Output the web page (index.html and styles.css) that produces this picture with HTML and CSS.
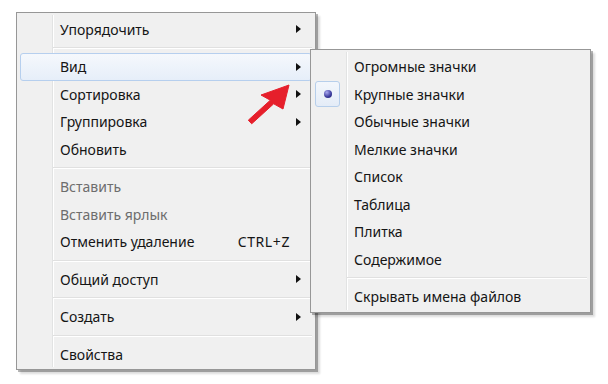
FILE: index.html
```html
<!DOCTYPE html>
<html lang="ru">
  <head>
    <meta charset="UTF-8" />
    <meta name="viewport" content="width=device-width, initial-scale=1.0" />
    <title>Контекстное меню</title>
    <link rel="stylesheet" href="styles.css">
  </head>
  <body>
    <div class="desktop">
      <ul class="menu main-menu">
        <li class="item has-sub">Упорядочить</li>
        <li class="sep"></li>
        <li class="item has-sub hover">Вид</li>
        <li class="item has-sub">Сортировка</li>
        <li class="item has-sub">Группировка</li>
        <li class="item">Обновить</li>
        <li class="sep"></li>
        <li class="item disabled">Вставить</li>
        <li class="item disabled">Вставить ярлык</li>
        <li class="item">Отменить удаление<span class="shortcut">CTRL+Z</span></li>
        <li class="sep"></li>
        <li class="item has-sub">Общий доступ</li>
        <li class="sep"></li>
        <li class="item has-sub">Создать</li>
        <li class="sep"></li>
        <li class="item">Свойства</li>
      </ul>

      <ul class="menu sub-menu">
        <li class="item">Огромные значки</li>
        <li class="item checked"><span class="radio"><span class="dot"></span></span>Крупные значки</li>
        <li class="item">Обычные значки</li>
        <li class="item">Мелкие значки</li>
        <li class="item">Список</li>
        <li class="item">Таблица</li>
        <li class="item">Плитка</li>
        <li class="item">Содержимое</li>
        <li class="sep"></li>
        <li class="item">Скрывать имена файлов</li>
      </ul>

      <svg class="pointer" width="608" height="384" viewBox="0 0 608 384">
        <polygon
          points="289,85 283,109 273.7,103.8 251.7,123.8 248.3,120.2 270.3,100.2 261,95"
          fill="#e61f2b"
          stroke="#e61f2b"
          stroke-width="1"
          stroke-linejoin="round"
        />
      </svg>
    </div>
  </body>
</html>
```

FILE: styles.css
```css
* {
  box-sizing: border-box;
  margin: 0;
  padding: 0;
}

body {
  background-color: #ffffff;
  font-family: "Noto Sans", "Open Sans", sans-serif;
  font-size: 14px;
  color: #151515;
}

.desktop {
  position: relative;
  width: 608px;
  height: 384px;
  padding: 12px 0 0 16px;
}

.menu {
  list-style: none;
  background-color: #f0f0f0;
  border: 1px solid #979797;
  box-shadow: 2px 2px 0 rgba(0, 0, 0, 0.28), 4px 4px 2px rgba(0, 0, 0, 0.14);
  position: relative;
}

/* vertical gutter line left of the labels */
.menu::before {
  content: "";
  position: absolute;
  top: 2px;
  bottom: 2px;
  left: 35px;
  width: 1px;
  background-color: #e2e3e3;
  box-shadow: 1px 0 0 #ffffff;
}

.main-menu {
  width: 300px;
  padding: 2.5px 0 1px;
}

.sub-menu {
  position: absolute;
  left: 310px;
  top: 49px;
  width: 281px;
  padding: 3px 0 1.5px;
}

.item {
  position: relative;
  height: 27.5px;
  line-height: 27.5px;
  padding-left: 40px;
  margin: 0 3px;
  white-space: nowrap;
}

.item.disabled {
  color: #6d6d6d;
}

.item.hover {
  background: linear-gradient(#f5f8fc, #e6eef9);
  border: 1px solid #b6cfee;
  border-radius: 3px;
  line-height: 25.5px;
  padding-left: 39px;
}

.has-sub::after {
  content: "";
  position: absolute;
  right: 11px;
  top: 50%;
  margin-top: -4px;
  border-left: 5px solid #111111;
  border-top: 4px solid transparent;
  border-bottom: 4px solid transparent;
}

.hover.has-sub::after {
  right: 10px;
}

.shortcut {
  position: absolute;
  right: 22px;
  letter-spacing: 0.6px;
}

.sep {
  height: 10px;
  margin-left: 36px;
  margin-right: 3px;
  position: relative;
}

.sep::after {
  content: "";
  position: absolute;
  left: 0;
  right: 0;
  top: 4px;
  height: 1px;
  background-color: #e0e0e0;
  box-shadow: 0 1px 0 #ffffff;
}

.radio {
  position: absolute;
  left: 1px;
  top: 0;
  width: 25px;
  height: 26px;
  border: 1px solid #b7cfeb;
  border-radius: 3px;
  background: linear-gradient(#f3f7fc, #e4ecf7);
}

.dot {
  position: absolute;
  left: 8px;
  top: 8px;
  width: 8px;
  height: 8px;
  border-radius: 50%;
  background: radial-gradient(circle at 35% 30%, #a9a9f0, #3a3a9c 60%, #23236a);
}

.pointer {
  position: absolute;
  left: 0;
  top: 0;
  pointer-events: none;
}
```
